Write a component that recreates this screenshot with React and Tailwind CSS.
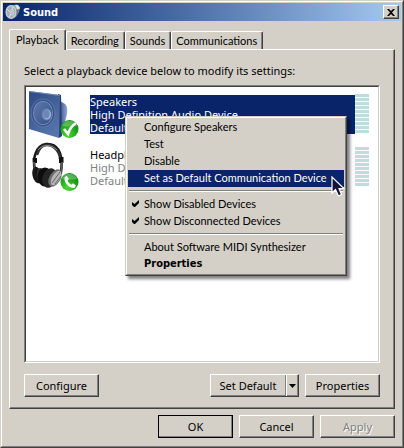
import clsx from 'clsx'

const TABS = ['Playback', 'Recording', 'Sounds', 'Communications']

const DEVICES = [
  { name: 'Speakers', driver: 'High Definition Audio Device', status: 'Default Device', icon: SpeakerIcon, selected: true },
  { name: 'Headphones', driver: 'High Definition Audio Device', status: 'Default Communication Device', icon: HeadphonesIcon },
]

const MENU = [
  [{ label: 'Configure Speakers' }, { label: 'Test' }, { label: 'Disable' }, { label: 'Set as Default Communication Device', active: true }],
  [{ label: 'Show Disabled Devices', checked: true }, { label: 'Show Disconnected Devices', checked: true }],
  [{ label: 'About Software MIDI Synthesizer' }, { label: 'Properties', bold: true }],
]

const RAISED = 'border border-t-white border-l-white border-r-[#404040] border-b-[#404040] shadow-[inset_-1px_-1px_0_#808080]'

function SoundIcon() {
  return (
    <svg width="16" height="16" viewBox="0 0 16 16" aria-hidden="true">
      <path d="M5 1.5 12 .5 15 3 14 8 11 13 6 15Z" fill="#8c979f" />
      <path d="M10 1 13 1 15 4 13 7Z" fill="#dce3e6" />
      <path d="M11 6 14 5 12 11 9 14Z" fill="#5e6c78" />
      <ellipse cx="6" cy="8" rx="5.6" ry="7" fill="#c6ced2" />
      <ellipse cx="6" cy="8" rx="4.3" ry="5.5" fill="#a3afb7" />
      <ellipse cx="7" cy="8.5" rx="2.4" ry="3.2" fill="#bcc6cb" />
      <path d="M2 5 5 8M4 13 6 10M8 3 7 6" stroke="#dce2e5" strokeWidth="1" />
    </svg>
  )
}

function Badge({ id, children }) {
  return (
    <g>
      <radialGradient id={id} cx="0.4" cy="0.8" r="0.8">
        <stop offset="0" stopColor="#4ddb35" />
        <stop offset="0.6" stopColor="#20a51b" />
        <stop offset="1" stopColor="#138018" />
      </radialGradient>
      <circle cx="43.5" cy="41" r="9" fill={`url(#${id})`} />
      <path d="M36 38a8 8 0 0 1 15 0q-7 1-15 0Z" fill="#8ed987" opacity="0.5" />
      {children}
    </g>
  )
}

function SpeakerIcon() {
  return (
    <svg width="54" height="52" viewBox="0 0 54 52" aria-hidden="true">
      <linearGradient id="face" x1="0" y1="0" x2="0.6" y2="1">
        <stop offset="0" stopColor="#2e4a82" />
        <stop offset="0.5" stopColor="#425e96" />
        <stop offset="1" stopColor="#5674ac" />
      </linearGradient>
      <linearGradient id="side">
        <stop offset="0" stopColor="#3c568d" />
        <stop offset="1" stopColor="#93a9d0" />
      </linearGradient>
      <linearGradient id="cone" x1="0" y1="0" x2="1" y2="1">
        <stop offset="0" stopColor="#5f79aa" />
        <stop offset="1" stopColor="#34508a" />
      </linearGradient>
      <path d="M34 13 39 16Q42 18 41 26L39 34 34 39Z" fill="url(#side)" />
      <path d="M32 6 35 7 36 48 33 50Z" fill="#263e72" />
      <path d="M3 3 34 7 33 50 3 41Z" fill="url(#face)" />
      <path d="M3 3.5 33.5 7.5" stroke="#7d96c2" strokeWidth="0.8" />
      <ellipse cx="17" cy="25" rx="12.5" ry="14.5" fill="#6f89b8" opacity="0.5" />
      <ellipse cx="17" cy="25" rx="11.5" ry="13.5" fill="#38538a" />
      <ellipse cx="17" cy="25" rx="10" ry="12" fill="#7d95c0" />
      <ellipse cx="17" cy="25" rx="9.2" ry="11.2" fill="url(#cone)" />
      <ellipse cx="20.5" cy="26.5" rx="5" ry="6" fill="#6580b0" />
      <ellipse cx="21" cy="26.5" rx="4" ry="5" fill="#a0b4d6" />
      <ellipse cx="20.4" cy="26" rx="3.2" ry="4.2" fill="#6b86b8" />
      <Badge id="badge-check">
        <path d="M38 41 42 46Q44 39 50 35" fill="none" stroke="#fff" strokeWidth="2.6" />
      </Badge>
    </svg>
  )
}

function HeadphonesIcon() {
  return (
    <svg width="54" height="52" viewBox="0 0 54 52" aria-hidden="true">
      <path d="M9 29C6 18 10 4 20 3 30 2 38 10 35 31" fill="none" stroke="#1b1b1b" strokeWidth="2.5" />
      <path d="M11 14C13 7 17 4 21 4 28 4 34 11 34 18" fill="none" stroke="#333" strokeWidth="2.5" />
      <path d="M12 9C17 3 25 3 31 9" fill="none" stroke="#aaa" strokeWidth="0.8" />
      <path d="M6.5 17 11 17 11 22 7 22ZM33 16 37.5 16 37.5 22 33 22Z" fill="#111" />
      <path d="M8 21 10 33M36 21 35 33" stroke="#555" strokeWidth="2" />
      <ellipse cx="11" cy="34" rx="4.5" ry="8.5" fill="#181818" transform="rotate(-12 11 34)" />
      <ellipse cx="15" cy="35" rx="4" ry="8" fill="#333" transform="rotate(-8 15 35)" />
      <ellipse cx="19" cy="36" rx="7.5" ry="9.5" fill="#0d0d0d" />
      <ellipse cx="23.5" cy="37" rx="7" ry="10" fill="#242424" transform="rotate(18 23.5 37)" />
      <ellipse cx="29" cy="37" rx="5.5" ry="9.5" fill="#6d6d6d" transform="rotate(30 29 37)" />
      <ellipse cx="30" cy="37" rx="3.8" ry="8" fill="#b5b5b5" transform="rotate(30 30 37)" />
      <path d="M26 42 34 31M29 43 35 35" stroke="#666" strokeWidth="1" />
      <Badge id="badge-phone">
        <path d="M38.5 36.5 40.5 34.8 43 38 41.5 39.8Q42.5 42.5 45.5 43.8L47 42.3 50 44.5 48.5 47Q44 47.5 40.5 43 37.8 39.5 38.5 36.5Z" fill="#fff" />
      </Badge>
    </svg>
  )
}

function Cursor() {
  return (
    <svg className="absolute top-[59px] left-[205px]" width="14" height="22" viewBox="0 0 14 22" aria-hidden="true">
      <path d="M1 1V17L4.5 13.5 7.5 20 10.5 18.5 8 12.5H13Z" fill="#14143a" stroke="#fff" strokeWidth="1.2" />
    </svg>
  )
}

function Button({ children, className, ...props }) {
  return (
    <button type="button" className={clsx('h-[23px] w-[75px] bg-[#d4d0c8] text-center', RAISED, className)} {...props}>
      {children}
    </button>
  )
}

function Meter() {
  return (
    <div className="mt-[6px] flex w-[14px] flex-col gap-px">
      {Array.from({ length: 10 }, (_, i) => (
        <span key={i} className="h-[3px] bg-[#c0dce0]" />
      ))}
    </div>
  )
}

function Device({ name, driver, status, icon: Icon, selected }) {
  return (
    <li role="option" aria-selected={!!selected} className="flex h-[53px] items-start">
      <Icon />
      <div className={clsx('mt-[7px] ml-[10px] min-w-0 flex-1 leading-[13px] whitespace-nowrap', selected ? 'bg-[#0a246a] text-white' : 'text-[#808080]')}>
        <p className={clsx(!selected && 'text-black')}>{name}</p>
        <p>{driver}</p>
        <p>{status}</p>
      </div>
      <Meter />
    </li>
  )
}

function ContextMenu() {
  return (
    <div role="menu" className="absolute top-[30px] left-[100px] w-[222px] border border-t-[#d4d0c8] border-l-[#d4d0c8] border-r-[#404040] border-b-[#404040] bg-[#d4d0c8] font-[Lato,sans-serif] shadow-[3px_3px_3px_rgba(0,0,0,0.5)]">
      <div className="border border-t-white border-l-white border-r-[#808080] border-b-[#808080] p-px">
        {MENU.map((group, i) => (
          <div key={i}>
            {i > 0 && <hr className="mx-px mt-[3px] mb-1 h-[2px] border-t border-b border-t-[#808080] border-b-white" />}
            {group.map((item) => (
              <button
                key={item.label}
                type="button"
                role={item.checked ? 'menuitemcheckbox' : 'menuitem'}
                aria-checked={item.checked}
                className={clsx(
                  'flex h-[17px] w-full items-center pb-[2px] whitespace-nowrap',
                  item.active && 'bg-[#0a246a] text-white',
                  item.bold && "font-['DejaVu_Sans_Condensed',sans-serif] font-bold",
                )}
              >
                <span className="flex w-4 shrink-0 justify-center">
                  {item.checked && (
                    <svg width="8" height="7" viewBox="0 0 8 7" aria-hidden="true">
                      <path d="M0 2 2.5 4 7 0V3L3 7H2L0 5Z" />
                    </svg>
                  )}
                </span>
                {item.label}
              </button>
            ))}
          </div>
        ))}
      </div>
      <Cursor />
    </div>
  )
}

export default function App() {
  return (
    <div className="flex min-h-screen flex-col border border-t-[#d4d0c8] border-l-[#d4d0c8] border-r-[#404040] border-b-[#404040] bg-[#d4d0c8] font-['Noto_Sans',sans-serif] text-[11px] leading-[13px] text-black">
      <div className="flex flex-1 flex-col border border-t-white border-l-white border-r-[#808080] border-b-[#808080] p-px">
        <header className="flex h-[18px] items-center gap-[2px] bg-linear-to-r from-[#0a246a] to-[#a6caf0] pr-[2px] pl-[2px]">
          <SoundIcon />
          <h1 className="flex-1 font-['DejaVu_Sans_Condensed',sans-serif] font-bold text-white">Sound</h1>
          <button type="button" aria-label="Close" className={clsx('flex h-[14px] w-4 items-center justify-center bg-[#d4d0c8]', RAISED)}>
            <svg width="8" height="7" viewBox="0 0 8 7" aria-hidden="true">
              <path d="M0 0H2L4 2 6 0H8L5 3.5 8 7H6L4 5 2 7H0L3 3.5Z" />
            </svg>
          </button>
        </header>

        <main className="flex flex-1 flex-col px-[6px] pt-2 pb-[7px]">
          <div role="tablist" className="flex items-end font-[Lato,sans-serif]">
            {TABS.map((tab, i) => (
              <button
                key={tab}
                type="button"
                role="tab"
                aria-selected={i === 0}
                className={clsx(
                  'rounded-t-[2px] border-t border-r border-l border-t-white border-r-[#404040] border-l-white bg-[#d4d0c8] shadow-[inset_-1px_0_0_#808080]',
                  i === 0 ? 'relative -mb-px h-[21px] px-[6px] pb-[2px]' : 'h-[18px] pr-[5px] pl-1',
                )}
              >
                {tab}
              </button>
            ))}
          </div>

          <section className={clsx('flex flex-1 flex-col px-[14px] pt-[14px] pb-[11px]', RAISED)}>
            <p id="hint">Select a playback device below to modify its settings:</p>
            <div className="relative mt-2 flex flex-1 border border-t-[#808080] border-l-[#808080] border-r-white border-b-white">
              <ul role="listbox" aria-labelledby="hint" className="flex-1 border border-t-[#404040] border-l-[#404040] border-r-[#d4d0c8] border-b-[#d4d0c8] bg-white pt-px pr-[9px]">
                {DEVICES.map((device) => (
                  <Device key={device.name} {...device} />
                ))}
              </ul>
              <ContextMenu />
            </div>
            <div className="mt-[11px] flex">
              <Button>Configure</Button>
              <div className={clsx('mr-[6px] ml-auto flex h-[23px]', RAISED)}>
                <button type="button" className="w-[75px] border-r border-r-[#808080]">Set Default</button>
                <button type="button" aria-label="More defaults" className="flex w-3 items-center justify-center border-l border-l-white">
                  <svg width="7" height="4" viewBox="0 0 7 4" aria-hidden="true">
                    <path d="M0 0H7L3.5 4Z" />
                  </svg>
                </button>
              </div>
              <Button>Properties</Button>
            </div>
          </section>

          <footer className="mt-[6px] flex justify-end gap-[6px]">
            <Button className="outline outline-black -outline-offset-1">OK</Button>
            <Button>Cancel</Button>
            <Button disabled className="text-[#808080] text-shadow-[1px_1px_0_#fff]">Apply</Button>
          </footer>
        </main>
      </div>
    </div>
  )
}
